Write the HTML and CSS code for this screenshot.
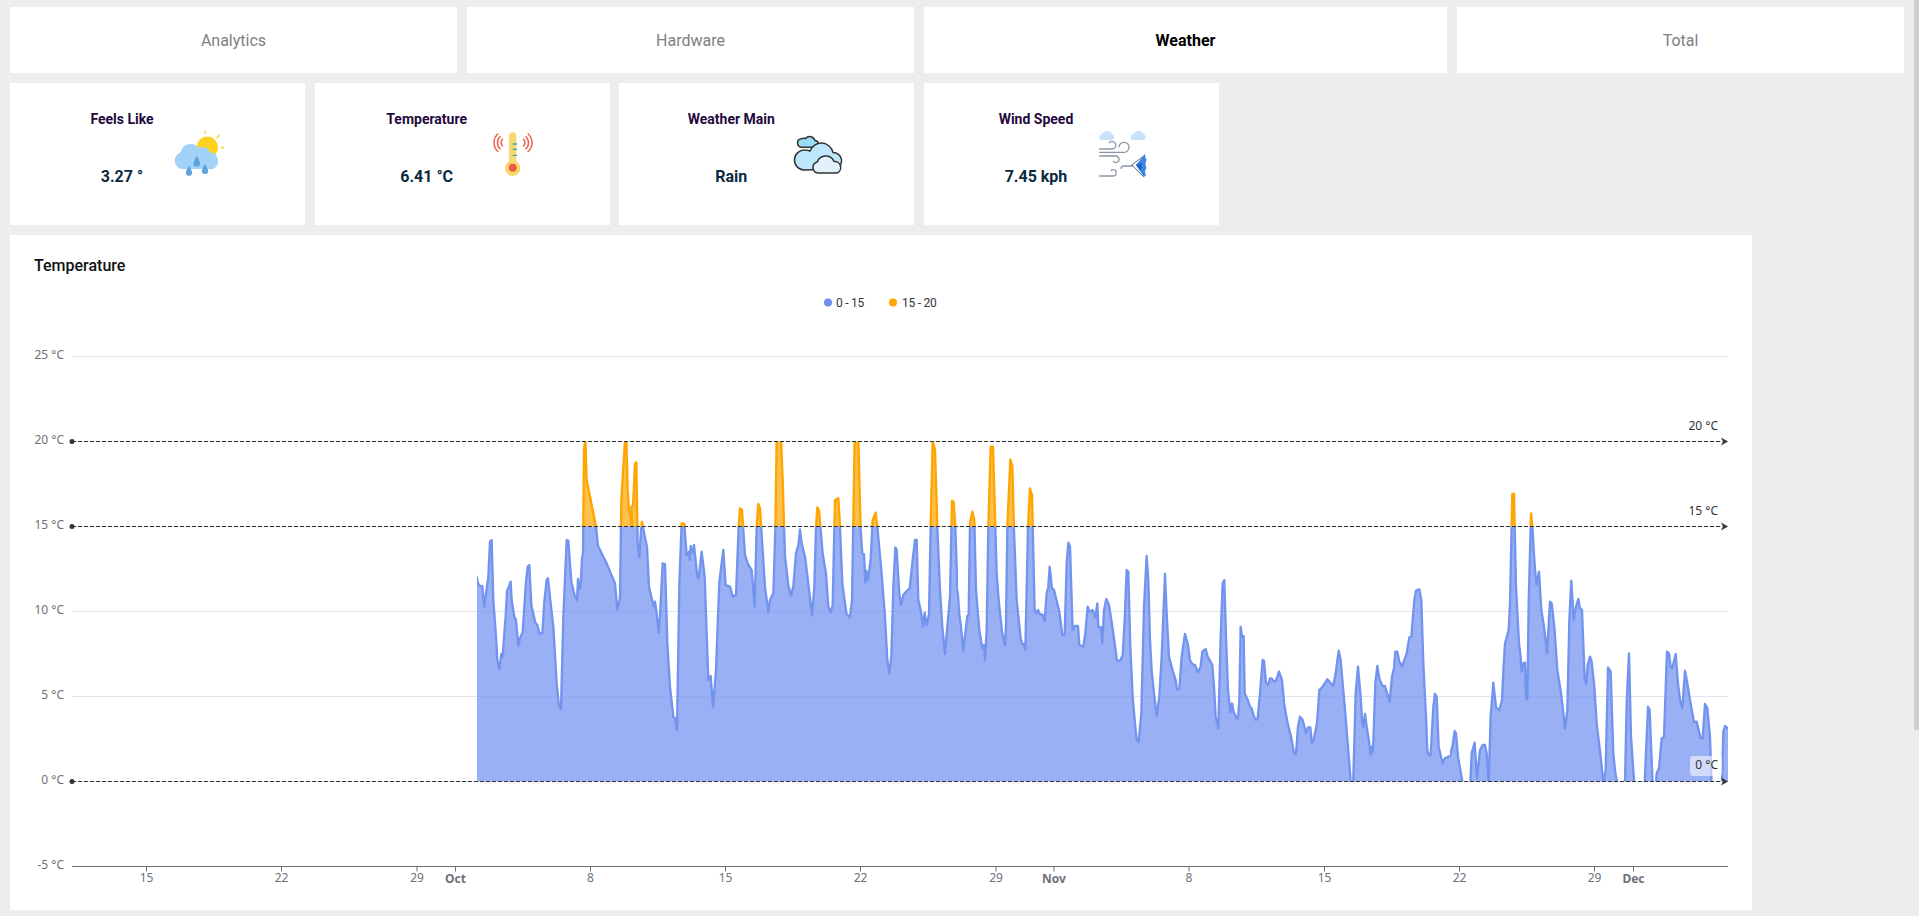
FILE: index.html
```html
<!DOCTYPE html>
<html lang="en">
<head>
<meta charset="utf-8">
<title>Weather</title>
<link rel="stylesheet" href="styles.css">
</head>
<body>
<main class="page">
  <nav class="tabs">
    <a class="tab">Analytics</a>
    <a class="tab">Hardware</a>
    <a class="tab tab-active">Weather</a>
    <a class="tab">Total</a>
  </nav>
  <section class="cards">
    <article class="card">
      <div class="card-text"><h3 class="card-title">Feels Like</h3><p class="card-value">3.27 °</p></div>
      <svg class="card-icon card-icon-left" viewBox="0 0 50 50">
        <circle cx="33.3" cy="19.3" r="10.7" fill="#ffd21f"/>
        <path d="M31 2.7V6M45.3 7l-2.6 3.3M47 19.3l3 .7" stroke="#ffd21f" stroke-width="1.3" fill="none"/>
        <path d="M8 41a8.500 8.500 0 0 1-1.500-16.500A10.500 10.500 0 0 1 25 20A8 8 0 0 1 36 24A9 9 0 0 1 39 41z" fill="#a3d2f8"/>
        <path d="M22.700 27.700q3.300 5.500 3.300 7.700a3.300 3.300 0 0 1-6.600 0q0-2.200 3.300-7.700zM15 37.700q3.100 5 3.100 7a3.100 3.100 0 0 1-6.200 0q0-2 3.100-7zM31 36q3.100 5 3.100 7a3.100 3.100 0 0 1-6.200 0q0-2 3.100-7z" fill="#5fa3dc"/>
      </svg>
    </article>
    <article class="card">
      <div class="card-text"><h3 class="card-title">Temperature</h3><p class="card-value">6.41 °C</p></div>
      <svg class="card-icon" viewBox="0 0 50 50">
        <path d="M20 8a3.650 3.650 0 0 1 7.300 0v25.500a7.700 7.700 0 1 1-7.300 0z" fill="#f6d96f"/>
        <circle cx="23.700" cy="39.700" r="4" fill="#ee5a45"/>
        <path d="M23.700 16H28M23.700 21.300H28M23.700 27.300H28" stroke="#45a5a0" stroke-width="1.300" fill="none"/>
        <path d="M9.300 5.500A12 12 0 0 0 9.300 23.900M11.500 8.200A8.500 8.500 0 0 0 11.500 21.200M13.800 10.900A5 5 0 0 0 13.800 18.500M38.700 5.500A12 12 0 0 1 38.700 23.900M36.500 8.200A8.500 8.500 0 0 1 36.500 21.200M34.200 10.900A5 5 0 0 1 34.200 18.500" stroke="#ef6351" stroke-width="1.500" fill="none"/>
      </svg>
    </article>
    <article class="card">
      <div class="card-text"><h3 class="card-title">Weather Main</h3><p class="card-value">Rain</p></div>
      <svg class="card-icon" viewBox="0 0 50 50">
        <g stroke="#333" stroke-width="1.500" stroke-linejoin="round">
          <path d="M8.500 19.300a4.300 4.300 0 0 1-.5-8.500c1.500-.5 3.500-.7 4.500-.3a5.500 5.500 0 0 1 9.500 2a3.500 3.500 0 0 1 1 6.800z" fill="#9adcf7"/>
          <path d="M11 42a10 10 0 0 1 1-20c1 0 3 .3 5 1a12 12 0 0 1 23 1.500a8.500 8.500 0 0 1 3 16.500z" fill="#bfe7fb"/>
          <path d="M25 45a5.600 5.600 0 0 1-.8-11a9 9 0 0 1 16.800-.5a6 6 0 0 1 3 11.500z" fill="#e3f1fb"/>
        </g>
      </svg>
    </article>
    <article class="card">
      <div class="card-text"><h3 class="card-title">Wind Speed</h3><p class="card-value">7.45 kph</p></div>
      <svg class="card-icon" viewBox="0 0 50 50">
        <path d="M4 12a2.700 2.700 0 0 1-.2-5.400a5.500 5.500 0 0 1 10.200-.4a3 3 0 0 1 0 5.800zM35.500 12a2.700 2.700 0 0 1-.2-5.400a5.500 5.500 0 0 1 10.200-.4a3 3 0 0 1 0 5.800z" fill="#c9e2fb"/>
        <path d="M1.300 21H14a3.800 3.800 0 1 0-3-6M1.300 24.300H26a5 5 0 1 0-5-5M1.300 28H18a3.300 3.300 0 1 1-3 5M1.300 48H15a3.200 3.200 0 0 0 0-6.400a2 2 0 0 0-2 1.500M35 38H26a3 3 0 0 0-3 3" stroke="#8b95a8" stroke-width="1.300" fill="none"/>
        <path d="M33.700 37L47 27M33.700 37L46 49" stroke="#5c6b85" stroke-width="1" fill="none"/>
        <path d="M47 26L38 37L46 49L48 47Q46 43 48.500 40Q46.500 36 48.500 32Q47 29 47 26z" fill="#3b86e6"/>
        <path d="M38 37L44 34.500L43 43z" fill="#1f5fbf"/>
      </svg>
    </article>
  </section>
  <section class="chart-card">
    <h2 class="chart-title">Temperature</h2>
    <svg class="chart" viewBox="10 285 1742 625">
      <defs>
        <clipPath id="clip-a"><rect x="477" y="400" width="481" height="400"/></clipPath>
        <clipPath id="clip-b"><rect x="958" y="400" width="492" height="400"/></clipPath>
        <clipPath id="clip-c"><rect x="1450" y="400" width="278" height="400"/></clipPath>
        <clipPath id="clip-low"><rect x="70" y="526.500" width="1660" height="255"/></clipPath>
        <clipPath id="clip-high"><rect x="70" y="441.500" width="1660" height="85"/></clipPath>
        <g id="series">
          <g clip-path="url(#clip-a)"><path transform="translate(460 430) scale(.33333)" d="M30 1060L30 440L50 440L54 460L62 470L67 468L73 530L80 475L85 440L90 335L95 330L100 510L108 620L112 690L118 718L124 672L128 680L133 610L137 560L141 482L147 470L152 455L155 510L163 560L168 570L175 648L180 625L188 607L198 455L203 410L208 405L214 525L226 578L232 585L238 610L247 610L253 515L260 450L264 445L272 520L280 590L290 760L296 820L303 838L310 560L320 330L325 332L334 455L345 500L351 510L354 447L358 478L362 470L366 385L369 370L372 60L376 30L380 150L388 190L400 250L408 290L414 347L425 370L440 400L465 460L472 538L480 505L484 210L495 30L499 30L503 180L507 245L511 250L516 290L514 230L519 228L525 100L529 97L533 340L538 383L543 300L546 275L553 313L561 350L567 470L575 505L581 530L585 515L590 550L596 608L600 560L608 400L615 402L622 640L630 770L640 860L645 865L651 900L658 460L665 280L673 282L680 375L687 365L689 390L692 348L697 367L702 345L712 440L716 447L725 365L734 440L745 750L752 738L759 832L768 720L778 455L790 360L797 465L810 470L818 500L828 495L836 290L840 235L846 240L855 375L865 405L875 420L884 530L890 290L895 222L900 235L915 470L925 547L930 510L940 490L946 300L950 25L963 25L968 150L975 380L985 465L993 497L1000 470L1008 370L1015 345L1020 298L1025 340L1036 385L1046 470L1056 557L1063 470L1068 290L1072 232L1077 240L1088 370L1098 430L1105 530L1112 547L1118 525L1125 210L1135 205L1140 290L1147 460L1155 520L1160 553L1170 562L1176 510L1184 25L1195 25L1202 300L1207 370L1212 372L1216 458L1219 422L1224 450L1232 390L1238 270L1247 248L1252 290L1264 420L1275 560L1282 690L1288 730L1294 680L1300 470L1306 352L1310 360L1318 490L1323 525L1330 495L1340 483L1349 475L1358 390L1365 330L1370 330L1375 510L1382 540L1389 590L1394 548L1400 585L1407 555L1412 290L1418 30L1425 60L1432 290L1440 480L1447 590L1455 672L1462 590L1470 500L1476 212L1481 215L1486 290L1492 470L1500 555L1520 555L1520 1060"/></g>
          <g clip-path="url(#clip-b)"><path transform="translate(950 430) scale(.33333)" d="M0 1060L0 450L16 450L24 495L28 555L33 590L40 663L52 558L56 555L60 278L67 245L73 270L78 480L88 600L97 655L102 645L105 690L110 600L115 290L122 50L129 50L140 430L146 510L156 605L165 645L168 585L172 290L181 88L187 110L192 300L200 510L212 625L217 642L222 642L226 660L234 290L240 175L246 195L254 540L258 550L264 540L270 553L277 553L284 573L290 490L295 470L299 410L306 475L312 480L328 545L337 615L344 613L350 400L355 338L360 350L368 600L374 588L384 588L388 645L400 650L406 610L413 530L418 545L428 540L436 562L442 520L445 590L453 592L457 640L462 540L469 507L477 525L487 590L494 640L501 692L511 692L518 675L524 570L530 420L535 425L541 650L548 800L555 880L560 930L566 935L574 850L582 530L590 378L595 450L600 630L605 720L612 790L620 858L628 800L635 680L645 432L650 550L657 680L668 722L677 750L681 778L688 778L695 680L705 612L713 640L720 690L727 703L735 705L744 727L752 710L757 665L767 657L773 680L787 705L792 770L797 860L805 895L812 620L818 460L823 450L828 620L834 780L841 848L846 820L851 845L860 865L864 865L868 810L872 590L876 620L881 618L884 790L893 810L900 830L905 835L912 860L918 870L923 865L930 790L938 690L942 692L948 758L955 765L960 745L965 745L972 755L978 752L987 725L996 750L1003 825L1013 880L1022 915L1032 968L1038 973L1044 890L1050 860L1058 870L1068 910L1074 892L1081 892L1086 940L1092 925L1097 900L1101 880L1108 780L1116 773L1132 748L1150 768L1157 730L1166 662L1172 690L1185 840L1198 1000L1204 1080L1209 1080L1217 790L1224 710L1232 800L1236 870L1240 892L1245 852L1250 890L1258 940L1262 975L1265 950L1269 965L1276 760L1282 708L1288 745L1297 768L1305 768L1313 795L1319 815L1326 740L1332 715L1336 665L1342 665L1348 695L1356 710L1370 670L1378 622L1384 620L1393 510L1398 482L1408 478L1414 510L1420 700L1428 860L1432 960L1436 975L1442 975L1450 830L1455 792L1460 800L1466 950L1474 985L1478 1000L1484 985L1500 978L1520 978L1520 1080"/></g>
          <g clip-path="url(#clip-c)"><path transform="translate(1430 470) scale(.33333)" d="M40 960L40 858L60 858L68 825L74 783L78 790L84 860L98 940L105 970L115 970L121 940L125 850L134 818L141 925L150 840L158 825L165 825L170 850L176 940L182 740L190 638L198 712L208 720L216 690L220 605L225 520L230 503L236 480L240 400L247 72L252 72L258 350L263 445L267 520L272 560L275 605L280 580L285 578L288 685L292 688L296 400L303 130L307 170L313 270L319 345L327 305L334 420L342 470L351 550L360 395L365 400L373 470L382 600L394 675L405 775L412 720L418 450L424 332L431 450L438 410L445 387L450 415L456 420L464 625L469 642L473 585L480 560L485 575L493 650L500 760L512 860L520 940L527 900L534 592L542 605L550 850L556 910L563 945L570 970L578 970L585 940L590 700L597 550L603 800L613 945L620 970L638 970L644 940L654 710L659 720L668 945L672 970L676 970L680 910L687 895L695 805L702 800L711 545L717 550L722 590L727 595L737 552L744 640L750 690L757 715L765 602L772 640L780 690L792 755L800 755L812 805L818 805L825 702L832 715L840 800L845 945L850 970L870 970L876 940L880 785L885 768L893 775L910 775L910 970"/></g>
        </g>
      </defs>

      <g class="legend">
        <circle class="dot-blue" cx="828" cy="302.500" r="4"/>
        <text class="legend-text" x="836" y="306.500">0 - 15</text>
        <circle class="dot-orange" cx="893" cy="302.500" r="4"/>
        <text class="legend-text" x="902" y="306.500">15 - 20</text>
      </g>

      <g class="grid">
        <path d="M72 356.500H1728M72 441.500H1728M72 526.500H1728M72 611.500H1728M72 696.500H1728M72 781.500H1728"/>
      </g>

      <use href="#series" class="series-low" clip-path="url(#clip-low)"/>
      <use href="#series" class="series-high" clip-path="url(#clip-high)"/>

      <g class="y-labels">
        <text x="64" y="358.500">25 °C</text>
        <text x="64" y="443.500">20 °C</text>
        <text x="64" y="528.500">15 °C</text>
        <text x="64" y="613.500">10 °C</text>
        <text x="64" y="698.500">5 °C</text>
        <text x="64" y="783.500">0 °C</text>
        <text x="64" y="868.500">-5 °C</text>
      </g>

      <path class="axis" d="M72 866.500H1728M146.500 866.500v5M281.500 866.500v5M417 866.500v5M455.500 866.500v5M590.500 866.500v5M725.500 866.500v5M860.500 866.500v5M996 866.500v5M1054 866.500v5M1189 866.500v5M1324.500 866.500v5M1459.500 866.500v5M1594.500 866.500v5M1633.500 866.500v5"/>
      <g class="x-labels">
        <text x="146.500" y="882">15</text>
        <text x="281.500" y="882">22</text>
        <text x="417" y="882">29</text>
        <text class="x-month" x="455.500" y="883">Oct</text>
        <text x="590.500" y="882">8</text>
        <text x="725.500" y="882">15</text>
        <text x="860.500" y="882">22</text>
        <text x="996" y="882">29</text>
        <text class="x-month" x="1054" y="883">Nov</text>
        <text x="1189" y="882">8</text>
        <text x="1324.500" y="882">15</text>
        <text x="1459.500" y="882">22</text>
        <text x="1594.500" y="882">29</text>
        <text class="x-month" x="1633.500" y="883">Dec</text>
      </g>

      <path class="mark-line" d="M72 441.500H1722M72 526.500H1722M72 781.500H1722"/>
      <g class="mark-ends">
        <circle cx="72" cy="441.500" r="2.500"/><circle cx="72" cy="526.500" r="2.500"/><circle cx="72" cy="781.500" r="2.500"/>
        <path d="M1728 441.500L1721 437.500L1723 441.500L1721 445.500zM1728 526.500L1721 522.500L1723 526.500L1721 530.500zM1728 781.500L1721 777.500L1723 781.500L1721 785.500z"/>
      </g>
      <rect class="mark-bg" x="1690" y="756" width="32" height="20" rx="3"/>
      <g class="mark-labels">
        <text x="1718" y="429.500">20 °C</text>
        <text x="1718" y="515">15 °C</text>
        <text x="1718" y="768.500">0 °C</text>
      </g>
    </svg>
  </section>
</main>
<div class="scroll-thumb"></div>
</body>
</html>
```
FILE: styles.css
```css
* { box-sizing: border-box; }
html, body { margin: 0; height: 100%; }
body {
  background: #ededed;
  font-family: Roboto, "Liberation Sans", sans-serif;
  overflow: hidden;
}
.page {
  display: flex;
  flex-direction: column;
  gap: 10px;
  padding: 7px 0 0 10px;
}
.tabs {
  display: grid;
  grid-template-columns: 447px 447px 523px 447px;
  gap: 10px;
  width: 1894px;
}
.tab {
  height: 66px;
  background: #fff;
  display: flex;
  align-items: center;
  justify-content: center;
  font-size: 16px;
  color: #808080;
}
.tab-active { color: #000; font-weight: 700; }
.cards {
  display: grid;
  grid-template-columns: repeat(4, 295px);
  gap: 9.67px;
}
.card {
  height: 142px;
  background: #fff;
  display: flex;
  padding-left: 50px;
}
.card-text {
  width: 124px;
  padding-top: 27px;
  display: flex;
  flex-direction: column;
  gap: 39px;
  text-align: center;
}
.card-title {
  margin: 0;
  font-size: 14px;
  line-height: 18px;
  font-weight: 700;
  color: #230a3e;
  white-space: nowrap;
}
.card-value {
  margin: 0;
  font-size: 16px;
  line-height: 20px;
  font-weight: 700;
  color: #0a2a3f;
  white-space: nowrap;
}
.card-icon {
  width: 50px;
  height: 50px;
  margin-top: 45px;
  flex: none;
  overflow: visible;
}
.card-icon-left { margin-left: -10px; }
.chart-card {
  width: 1742px;
  height: 675px;
  background: #fff;
}
.chart-title {
  margin: 0;
  padding: 21px 24px 9px;
  font-size: 16px;
  line-height: 20px;
  font-weight: 500;
  color: #111;
}
.chart {
  display: block;
  width: 1742px;
  height: 625px;
}
.chart text { font-family: "Noto Sans", "Open Sans", sans-serif; font-size: 12px; }
.chart .legend-text { fill: #333; font-family: Roboto, sans-serif; letter-spacing: -.25px; }
.dot-blue { fill: #6f8ff0; }
.dot-orange { fill: #ffa500; }
.grid path { stroke: #e0e6f1; stroke-width: 1; fill: none; }
.series-low, .series-high {
  stroke-width: 7;
  stroke-linejoin: round;
  fill-opacity: .7;
}
.series-low { fill: #6f8ff0; stroke: #7294ee; }
.series-high { fill: #ffa500; stroke: #ffa500; }
.y-labels text { fill: #6e7079; text-anchor: end; }
.x-labels text { fill: #6e7079; text-anchor: middle; }
.chart .x-month { font-weight: 700; }
.axis { stroke: #6e7079; stroke-width: 1; fill: none; }
.mark-line { stroke: #333; stroke-width: 1; stroke-dasharray: 4 2; fill: none; }
.mark-ends { fill: #333; }
.mark-bg { fill: #fff; fill-opacity: .55; }
.mark-labels text { fill: #333; text-anchor: end; }
.scroll-thumb {
  position: fixed;
  top: 0;
  right: 0;
  width: 5px;
  height: 730px;
  background: #d0d0d0;
}
```
